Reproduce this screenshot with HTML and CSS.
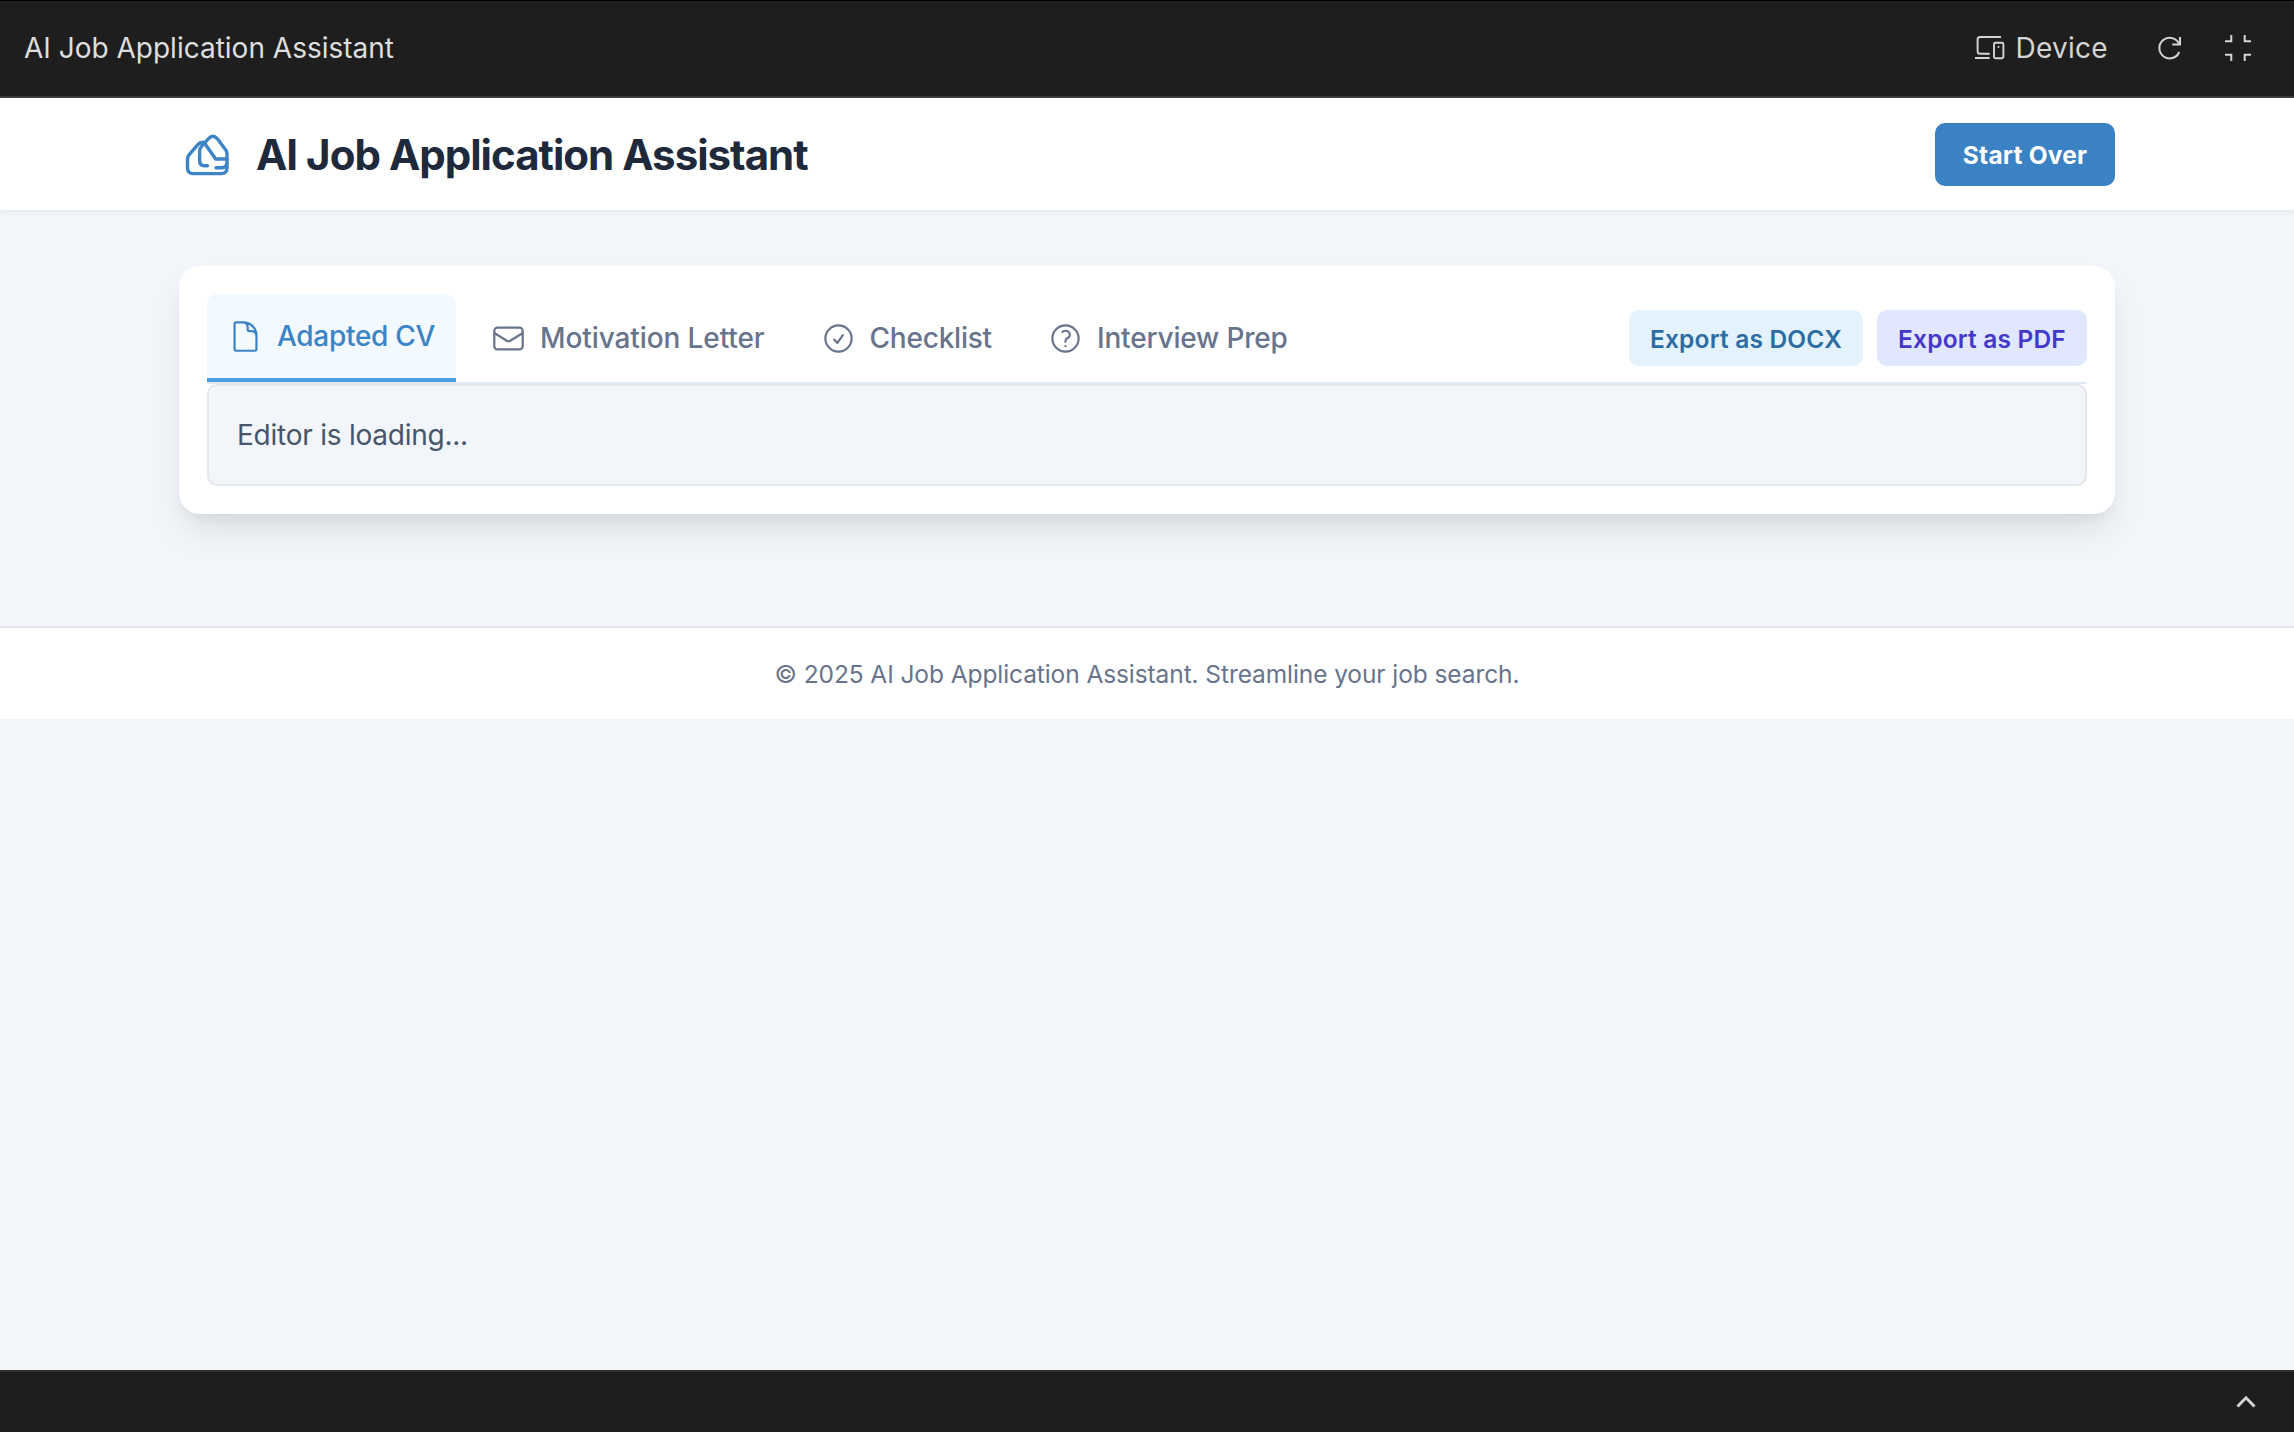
FILE: index.html
```html
<!DOCTYPE html>
<html lang="en">
<head>
<meta charset="utf-8">
<title>AI Job Application Assistant</title>
<link rel="stylesheet" href="styles.css">
</head>
<body>
<div class="topbar">
  <span class="topbar-title">AI Job Application Assistant</span>
  <div class="topbar-actions">
    <button class="device">
      <svg width="30" height="26" viewBox="0 0 30 26" fill="none" stroke="currentColor" stroke-width="1.9">
        <path d="M26 2H5.200Q2.600 2 2.600 4.600V16.200Q2.600 18.800 5.200 18.800H14.700M0 23H14.700"/>
        <rect x="19" y="7.700" width="9.400" height="15.600" rx="1.500"/>
        <circle cx="23.500" cy="12" r="1" fill="currentColor" stroke="none"/>
      </svg>
      <span>Device</span>
    </button>
    <svg class="reload" width="24" height="26" viewBox="0 0 24 26" fill="none" stroke="currentColor" stroke-width="2">
      <path d="M21.200 17A10.300 10.300 0 1 1 20.800 8.300M22 2V9.500H14.200"/>
    </svg>
    <svg width="26" height="26" viewBox="0 0 26 26" fill="none" stroke="currentColor" stroke-width="2">
      <path d="M0 6.300H6.300V0M19.700 0V6.300H26M0 19.700H6.300V26M19.700 26V19.700H26"/>
    </svg>
  </div>
</div>

<div class="app">
  <header class="header">
    <div class="container header-row">
      <div class="brand">
        <svg class="logo" viewBox="0 0 56 56" fill="none" stroke="currentColor" stroke-width="3.400" stroke-linecap="round" stroke-linejoin="round">
          <path d="M26 16.500Q21.300 15.500 18.800 18.600L9.800 29.200Q8.500 30.800 8.500 33V42Q8.500 47.600 14.200 47.600H42.300Q48 47.600 48 42V27.500Q48 25.500 46.800 23.900L38.400 12.800Q33.900 7.800 29.300 12.800L22.200 20.800Q20.600 22.600 20.600 25.200V34.500Q20.600 39.700 25.800 39.700H28.400"/>
          <path d="M26.300 18.300 36.700 33H48M37 41.700H42.500Q47 41.700 48 37.500"/>
        </svg>
        <h1>AI Job Application Assistant</h1>
      </div>
      <button class="start-over">Start Over</button>
    </div>
  </header>

  <main class="container main">
    <section class="card">
      <div class="tabs-row">
        <nav class="tabs">
          <button class="tab active">
            <svg class="icon" viewBox="0 0 24 24"><path d="M19.5 14.25v-2.625a3.375 3.375 0 0 0-3.375-3.375h-1.5A1.125 1.125 0 0 1 13.5 7.125v-1.5a3.375 3.375 0 0 0-3.375-3.375H8.25m2.250 0H5.625c-.621 0-1.125.504-1.125 1.125v17.25c0 .621.504 1.125 1.125 1.125h12.750c.621 0 1.125-.504 1.125-1.125V11.250a9 9 0 0 0-9-9Z"/></svg>
            <span class="label-cv">Adapted CV</span>
          </button>
          <button class="tab">
            <svg class="icon" viewBox="0 0 24 24"><path d="M21.75 6.75v10.500a2.250 2.250 0 0 1-2.250 2.250h-15a2.250 2.250 0 0 1-2.250-2.250V6.750m19.500 0A2.250 2.250 0 0 0 19.500 4.500h-15a2.250 2.250 0 0 0-2.250 2.250m19.500 0v.243a2.250 2.250 0 0 1-1.070 1.916l-7.500 4.615a2.250 2.250 0 0 1-2.360 0L3.320 8.910a2.250 2.250 0 0 1-1.070-1.916V6.750"/></svg>
            <span class="label-letter">Motivation Letter</span>
          </button>
          <button class="tab">
            <svg class="icon" viewBox="0 0 24 24"><path d="M9 12.750 11.250 15 15 9.750M21 12a9 9 0 1 1-18 0 9 9 0 0 1 18 0Z"/></svg>
            <span class="label-checklist">Checklist</span>
          </button>
          <button class="tab">
            <svg class="icon" viewBox="0 0 24 24"><path d="M9.879 7.519c1.171-1.025 3.071-1.025 4.242 0 1.172 1.025 1.172 2.687 0 3.712-.203.179-.430.326-.670.442-.745.361-1.450.999-1.450 1.827v.750M21 12a9 9 0 1 1-18 0 9 9 0 0 1 18 0Zm-9 5.250h.008v.008H12v-.008Z"/></svg>
            <span class="label-prep">Interview Prep</span>
          </button>
        </nav>
        <div class="exports">
          <button class="export docx">Export as DOCX</button>
          <button class="export pdf">Export as PDF</button>
        </div>
      </div>
      <div class="editor">Editor is loading...</div>
    </section>
  </main>

  <footer class="footer">© 2025 AI Job Application Assistant. Streamline your job search.</footer>
</div>

<div class="bottombar">
  <svg width="20" height="14" viewBox="0 0 20 14" fill="none" stroke="currentColor" stroke-width="3"><path d="M1.500 11.500 10 2.800 18.500 11.500"/></svg>
</div>
</body>
</html>
```
FILE: styles.css
```css
* { box-sizing: border-box; }
html { font-size: 28px; }
body {
  margin: 0;
  height: 1432px;
  display: flex;
  flex-direction: column;
  background: #f2f5fa;
  font-family: Inter, "Liberation Sans", sans-serif;
  line-height: 1.5;
  overflow: hidden;
}
button {
  border: 0;
  margin: 0;
  padding: 0;
  background: none;
  color: inherit;
  font: inherit;
  white-space: nowrap;
}
svg { display: block; flex: none; }

.topbar {
  height: 98px;
  flex: none;
  display: flex;
  align-items: center;
  justify-content: space-between;
  padding: 0 43px 1px 24px;
  background: #1e1e1e;
  border-top: 1px solid #000;
  border-bottom: 2px solid #3c3c3c;
  color: #d4d4d4;
}
.topbar-title { color: #dedede; }
.topbar-actions { display: flex; align-items: center; }
.device { display: flex; align-items: center; gap: 10px; letter-spacing: 0.3px; }
.reload { margin: 0 43px 0 50px; }

.app { flex: 1; }
.container { width: 1936px; margin: 0 auto; }
.header {
  background: #fff;
  box-shadow: 0 2px 4px rgba(0, 0, 0, 0.06);
}
.header-row {
  height: 112px;
  display: flex;
  align-items: center;
  justify-content: space-between;
}
.brand { display: flex; align-items: center; gap: 21px; }
.logo { width: 56px; height: 56px; color: #3d84c6; }
h1 {
  margin: 0;
  padding-top: 2px;
  font-size: 42px;
  line-height: 56px;
  font-weight: 700;
  letter-spacing: -0.99px;
  color: #1e293b;
}
.start-over {
  width: 180px;
  height: 63px;
  padding-top: 2px;
  border-radius: 10px;
  background: #3b82c4;
  color: #fff;
  font-size: 24.5px;
  font-weight: 650;
  letter-spacing: 0.2px;
}

.main { padding: 56px 0 112px; }
.card {
  padding: 28px;
  border-radius: 21px;
  background: #fff;
  box-shadow: 0 20px 34px -6px rgba(0, 0, 0, 0.1), 0 8px 12px -4px rgba(0, 0, 0, 0.05);
}
.tabs-row {
  display: flex;
  align-items: center;
  justify-content: space-between;
  border-bottom: 2px solid #e2e8f0;
}
.tabs { display: flex; align-items: center; gap: 14px; }
.tab {
  display: flex;
  align-items: center;
  gap: 14px;
  padding: 21px;
  font-weight: 500;
  line-height: 42px;
  color: #67748c;
}
.tab.active {
  color: #3a83c5;
  background: #f2f9ff;
  border-bottom: 4px solid #4a9fe0;
  border-radius: 10px 10px 0 0;
}
.label-cv { letter-spacing: -0.3px; }
.label-letter { letter-spacing: -0.1px; }
.label-checklist { letter-spacing: -0.22px; }
.label-prep { letter-spacing: -0.18px; }
.icon {
  width: 35px;
  height: 35px;
  fill: none;
  stroke: currentColor;
  stroke-width: 1.5;
  stroke-linecap: round;
  stroke-linejoin: round;
}
.exports { display: flex; gap: 14px; }
.export {
  height: 56px;
  padding-top: 2px;
  border-radius: 10px;
  font-size: 24.5px;
  font-weight: 600;
  letter-spacing: 0.18px;
}
.docx { width: 234px; background: #e3f2fd; color: #2b6ca3; }
.pdf { width: 210px; background: #e0e7ff; color: #4338ca; }
.editor {
  padding: 28px;
  border: 2px solid #e5e7eb;
  border-radius: 10px;
  background: #f2f5fa;
  color: #475569;
  letter-spacing: -0.24px;
}
.footer {
  padding: 29px 0 27px;
  border-top: 2px solid #e5e7eb;
  background: #fff;
  color: #67748c;
  font-size: 24.5px;
  line-height: 35px;
  letter-spacing: -0.09px;
  text-align: center;
}

.bottombar {
  height: 62px;
  flex: none;
  display: flex;
  align-items: center;
  justify-content: flex-end;
  padding-right: 38px;
  background: #1e1e1e;
  border-top: 2px solid #333;
  color: #d4d4d4;
}
```
